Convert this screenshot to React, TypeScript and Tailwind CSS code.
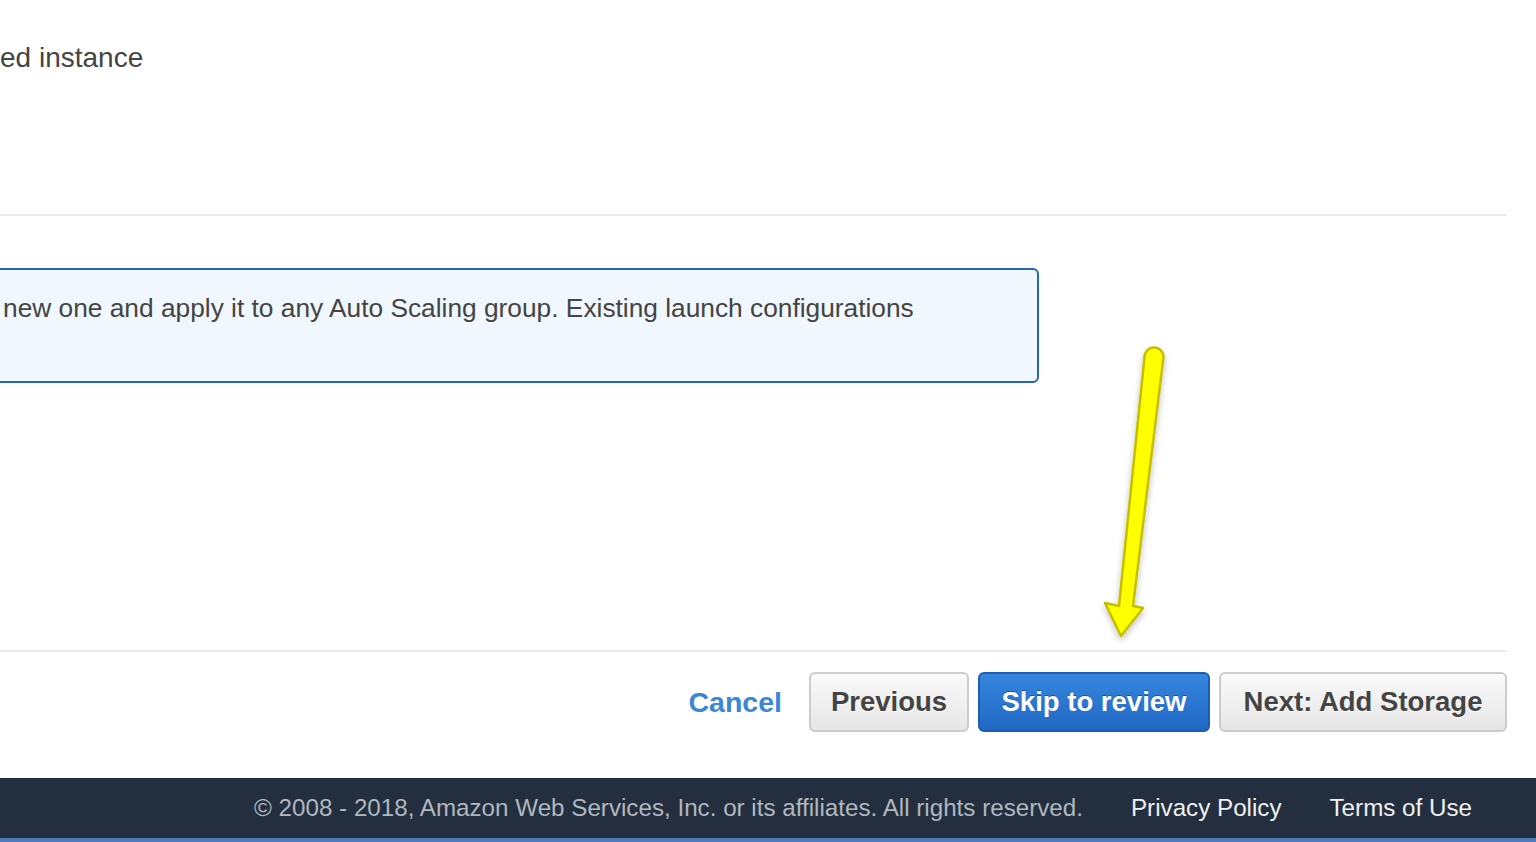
import React from 'react';

// Yellow annotation arrow pointing at "Skip to review"
const Arrow = () => (
  <svg
    className="absolute left-0 top-0 pointer-events-none"
    width="1536"
    height="842"
    viewBox="0 0 1536 842"
  >
    <defs>
      <filter id="arrowShadow" x="-50%" y="-10%" width="200%" height="120%">
        <feDropShadow dx="0" dy="3" stdDeviation="3" floodColor="#000" floodOpacity="0.25" />
      </filter>
    </defs>
    <path
      d="M1144.5,357 A9.5,9.5 0 0 1 1163.5,357 L1133,606 L1143,608 L1121,636 L1105,603 L1119,606 Z"
      fill="#ffff00"
      stroke="#c6bf00"
      strokeWidth="2.5"
      strokeLinejoin="round"
      filter="url(#arrowShadow)"
    />
  </svg>
);

const GrayBtn = ({ children, w }: { children: React.ReactNode; w: string }) => (
  <button
    type="button"
    className={`${w} h-[60px] flex items-center justify-center rounded-[6px] border-2 border-[#cccccc] bg-gradient-to-b from-[#fafafa] to-[#e6e6e6] text-[27.5px] font-bold text-[#444444] [text-shadow:0_1px_0_#ffffff]`}
  >
    {children}
  </button>
);

export default function App() {
  return (
    <div
      className="relative w-[1536px] h-[842px] overflow-hidden bg-white flex flex-col"
      style={{ fontFamily: '"Liberation Sans", Arial, sans-serif' }}
    >
      {/* ── Conteúdo ─────────────────────────────────────────── */}
      <div className="flex-1 flex flex-col pr-[29px]">
        <div className="pt-[41px] h-[214px] text-[28px] leading-[34px] text-[#444444]">
          ed instance
        </div>
        <div className="h-[2px] bg-[#eaeaea]" />

        <div className="mt-[52px] -ml-[20px] w-[1059px] h-[115px] rounded-[6px] border-2 border-[#2466b3] bg-[#f0f7fe] pl-[21px] pt-[21px]">
          <p className="text-[26.3px] leading-[34px] text-[#444444]">
            new one and apply it to any Auto Scaling group. Existing launch configurations
          </p>
        </div>

        <div className="mt-[267px] h-[2px] bg-[#eaeaea]" />

        <div className="mt-[20px] flex items-center justify-end gap-[9px]">
          <a className="mr-[18px] text-[28.5px] font-bold text-[#3a87d6] cursor-pointer">Cancel</a>
          <GrayBtn w="w-[160px]">Previous</GrayBtn>
          <button
            type="button"
            className="w-[232px] h-[60px] flex items-center justify-center rounded-[6px] border-2 border-[#1b5eae] bg-gradient-to-b from-[#3686dd] to-[#2068c4] text-[27.5px] font-bold text-white [text-shadow:0_-1px_0_#1a56a0]"
          >
            Skip to review
          </button>
          <GrayBtn w="w-[288px]">Next: Add Storage</GrayBtn>
        </div>
      </div>

      {/* ── Rodapé ───────────────────────────────────────────── */}
      <footer className="h-[60px] bg-[#232f3e] flex items-center justify-end pr-[64px] gap-[48px] text-[24.2px]">
        <span className="text-[#b0b7bf]">© 2008 - 2018, Amazon Web Services, Inc. or its affiliates. All rights reserved.</span>
        <a className="text-[#f0f0f0]">Privacy Policy</a>
        <a className="text-[#f0f0f0]">Terms of Use</a>
      </footer>
      <div className="h-[4px] bg-[#4d7cb8]" />

      <Arrow />
    </div>
  );
}
